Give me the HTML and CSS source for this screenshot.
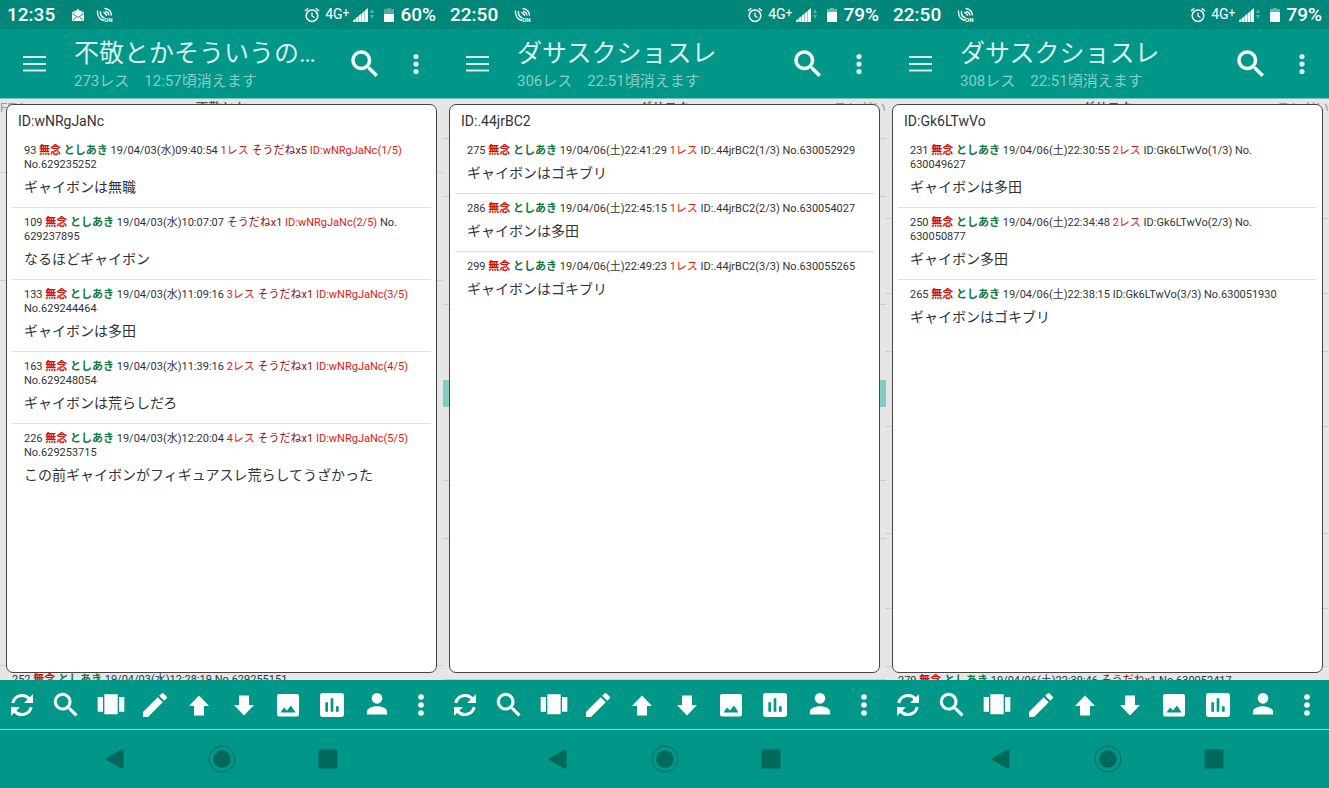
FILE: index.html
```html
<!DOCTYPE html>
<html lang="ja">
<head>
<meta charset="utf-8">
<meta name="viewport" content="width=device-width, initial-scale=1">
<title>スレッド ID抽出</title>
<link rel="stylesheet" href="styles.css">
</head>
<body>
<svg class="sprite" aria-hidden="true">
  <symbol id="mail" viewBox="0 0 14 14"><path d="M1 3.500 4 5 2.500 2.500 5 3 7 .8 9 3l2.500-.5L10 5l3-1.500V13H1z" fill="#fff"/><path d="M1.500 5.500 7 9.500l5.500-4M2 12.500l3.500-3.800M12 12.500 8.500 8.700" stroke="#00877a" fill="none" stroke-width=".9"/></symbol>
  <symbol id="sat" viewBox="0 0 17 16"><g fill="none" stroke="#fff" stroke-width="1.400"><path d="M1.500 3.500c-.5 5 2 9 6.500 10M4.500 4c-.5 3.500 1 6 4 7M7.500 5 11 8.500M8.500 1.500c4 .3 6.700 3 7 7M9 4.500c2.300.2 3.700 1.700 4 4"/></g></symbol>
  <symbol id="alarm" viewBox="0 0 16 16"><g fill="none" stroke="#fff"><circle cx="8" cy="8.700" r="5.800" stroke-width="1.500"/><path d="M8 5.500V9l2.500 1.500" stroke-width="1.200"/><path d="M1 4 4.200 1.200M15 4l-3.200-2.800" stroke-width="1.500"/></g></symbol>
  <symbol id="signal" viewBox="0 0 22 16"><path d="M0 15v-1.500l2.600-2V15zM3 15v-4l2.600-2v6zM6 15V8.500l2.600-2V15zM9 15V6l2.600-2v11zM12 15V3.500L15 1v14z" fill="#fff"/><path d="m17 6 2-4 2 4zM17 8h4l-2 4z" fill="#fff" opacity=".35"/></symbol>
  <symbol id="bat60" viewBox="0 0 10 16"><path d="M3 1h4v1h3v5H0V2h3z" fill="#fff" opacity=".3"/><path d="M0 7h10v8H0z" fill="#fff"/></symbol>
  <symbol id="bat79" viewBox="0 0 10 16"><path d="M3 1h4v1h3v3H0V2h3z" fill="#fff" opacity=".4"/><path d="M0 5h10v10H0z" fill="#fff"/></symbol>
  <symbol id="menu" viewBox="0 0 24 24"><path d="M0 4h23v2H0zM0 11h23v2H0zM0 17.500h23v2H0z" fill="currentColor"/></symbol>
  <symbol id="search" viewBox="0 0 24 24"><path d="M15.500 14h-.79l-.28-.27A6.471 6.471 0 0 0 16 9.500 6.500 6.500 0 1 0 9.500 16c1.610 0 3.090-.59 4.230-1.570l.27.28v.79l5 4.990L20.490 19l-4.990-5zm-6 0C7.010 14 5 11.990 5 9.500S7.010 5 9.500 5 14 7.010 14 9.500 11.990 14 9.500 14z" fill="currentColor" stroke="currentColor" stroke-width=".35"/></symbol>
  <symbol id="more" viewBox="0 0 24 24"><g fill="currentColor"><circle cx="12" cy="6" r="2.100"/><circle cx="12" cy="12" r="2.100"/><circle cx="12" cy="18" r="2.100"/></g></symbol>
  <symbol id="refresh" viewBox="0 0 32 32"><g fill="none" stroke="currentColor" stroke-width="3"><path d="M6.800 14A9.500 9.500 0 0 1 23.500 10"/><path d="M25.200 18A9.500 9.500 0 0 1 8.500 22"/></g><path d="M27 5v9h-9zM5 27v-9h9z" fill="currentColor"/></symbol>
  <symbol id="carousel" viewBox="0 0 24 24"><path d="M7 19h10V4H7zM2 17h4V6H2zM18 6v11h4V6z" fill="currentColor"/></symbol>
  <symbol id="edit" viewBox="0 0 24 24"><path d="M3 17.250V21h3.750L17.810 9.940l-3.750-3.750L3 17.250zM20.710 7.040a1 1 0 0 0 0-1.410l-2.340-2.340a1 1 0 0 0-1.410 0l-1.830 1.830 3.750 3.750 1.830-1.830z" fill="currentColor"/></symbol>
  <symbol id="up" viewBox="0 0 32 32"><path d="m16 6.500 10 10.500h-5v9.500H11V17H6z" fill="currentColor"/></symbol>
  <symbol id="down" viewBox="0 0 32 32"><path d="M16 26.500 6 16h5V6.500h10V16h5z" fill="currentColor"/></symbol>
  <symbol id="image" viewBox="0 0 32 32"><path fill-rule="evenodd" d="M7 5h18a2 2 0 0 1 2 2v18.500a2 2 0 0 1-2 2H7a2 2 0 0 1-2-2V7a2 2 0 0 1 2-2zm1.500 18.500h15l-4.500-7-4 5-3-3z" fill="currentColor"/></symbol>
  <symbol id="chart" viewBox="0 0 24 24"><path d="M19 3H5a2 2 0 0 0-2 2v14a2 2 0 0 0 2 2h14a2 2 0 0 0 2-2V5a2 2 0 0 0-2-2zM9 17H7v-7h2zm4 0h-2V7h2zm4 0h-2v-4h2z" fill="currentColor"/></symbol>
  <symbol id="person" viewBox="0 0 24 24"><path d="M12 11a4 4 0 1 0 0-8 4 4 0 0 0 0 8zm0 2c-2.670 0-7.600 1.340-7.600 4v2.200h15.200V17c0-2.660-4.930-4-7.600-4z" fill="currentColor"/></symbol>
  <symbol id="back" viewBox="0 0 28 28"><path d="M5.500 13 20.500 4.500q2-.8 2 1v17q0 1.800-2 1L5.500 15q-1.500-1 0-2z" fill="currentColor"/></symbol>
  <symbol id="home" viewBox="0 0 28 28"><circle cx="14" cy="14" r="13" fill="none" stroke="currentColor"/><circle cx="14" cy="14" r="8.700" fill="currentColor"/></symbol>
  <symbol id="recent" viewBox="0 0 28 28"><rect x="4.500" y="4.500" width="19" height="19" rx="1.500" fill="currentColor"/></symbol>
</svg>

<main class="phones">
  <section class="phone">
    <div class="status">
      <span class="clock">12:35</span>
      <svg class="ico-mail"><use href="#mail"/></svg>
      <svg class="ico-sat" viewBox="0 0 17 16"><use href="#sat"/><text x="8" y="15" class="on-mark">ON</text></svg>
      <span class="spacer"></span>
      <svg class="ico-alarm"><use href="#alarm"/></svg>
      <span class="net">4G<span class="plus">+</span></span>
      <svg class="ico-signal"><use href="#signal"/></svg>
      <svg class="ico-bat"><use href="#bat60"/></svg>
      <span class="level">60%</span>
    </div>
    <header class="appbar">
      <button class="icon-btn menu-btn" aria-label="メニュー"><svg><use href="#menu"/></svg></button>
      <div class="titles"><h1 class="title">不敬とかそういうの…</h1><p class="subtitle">273レス　12:57頃消えます</p></div>
      <button class="icon-btn search-btn" aria-label="検索"><svg><use href="#search"/></svg></button>
      <button class="icon-btn more-btn" aria-label="その他"><svg><use href="#more"/></svg></button>
    </header>
    <div class="stage">
      <div class="feed feed-a" aria-hidden="true">
        <div class="feed-row tabs"><span>FEVユ</span><span class="tab-now">不敬とか</span><span></span></div>
        <div class="feed-row"></div>
        <div class="feed-row"></div>
        <div class="feed-row post-peek"><p class="meta">252 <b class="subj">無念</b> <b class="name">としあき</b> 19/04/03(水)12:28:19 No.629255151</p></div>
      </div>
      <article class="dialog">
        <h2 class="dialog-title">ID:wNRgJaNc</h2>
        <ul class="posts">
          <li class="post"><p class="meta">93 <b class="subj">無念</b> <b class="name">としあき</b> 19/04/03(水)09:40:54 <span class="red">1レス</span> <span class="soudane">そうだねx5</span> <span class="red">ID:wNRgJaNc(1/5)</span> No.629235252</p><p class="body">ギャイボンは無職</p></li>
          <li class="post"><p class="meta">109 <b class="subj">無念</b> <b class="name">としあき</b> 19/04/03(水)10:07:07 <span class="soudane">そうだねx1</span> <span class="red">ID:wNRgJaNc(2/5)</span> No.<wbr>629237895</p><p class="body">なるほどギャイボン</p></li>
          <li class="post"><p class="meta">133 <b class="subj">無念</b> <b class="name">としあき</b> 19/04/03(水)11:09:16 <span class="red">3レス</span> <span class="soudane">そうだねx1</span> <span class="red">ID:wNRgJaNc(3/5)</span> No.629244464</p><p class="body">ギャイボンは多田</p></li>
          <li class="post"><p class="meta">163 <b class="subj">無念</b> <b class="name">としあき</b> 19/04/03(水)11:39:16 <span class="red">2レス</span> <span class="soudane">そうだねx1</span> <span class="red">ID:wNRgJaNc(4/5)</span> No.629248054</p><p class="body">ギャイボンは荒らしだろ</p></li>
          <li class="post"><p class="meta">226 <b class="subj">無念</b> <b class="name">としあき</b> 19/04/03(水)12:20:04 <span class="red">4レス</span> <span class="soudane">そうだねx1</span> <span class="red">ID:wNRgJaNc(5/5)</span> No.629253715</p><p class="body">この前ギャイボンがフィギュアスレ荒らしてうざかった</p></li>
        </ul>
      </article>
    </div>
    <div class="toolbar">
      <button class="tool" aria-label="更新"><svg><use href="#refresh"/></svg></button>
      <button class="tool" aria-label="検索"><svg><use href="#search"/></svg></button>
      <button class="tool" aria-label="一覧"><svg><use href="#carousel"/></svg></button>
      <button class="tool" aria-label="書き込み"><svg><use href="#edit"/></svg></button>
      <button class="tool" aria-label="上へ"><svg><use href="#up"/></svg></button>
      <button class="tool" aria-label="下へ"><svg><use href="#down"/></svg></button>
      <button class="tool" aria-label="画像"><svg><use href="#image"/></svg></button>
      <button class="tool" aria-label="集計"><svg><use href="#chart"/></svg></button>
      <button class="tool" aria-label="ID"><svg><use href="#person"/></svg></button>
      <button class="tool" aria-label="その他"><svg><use href="#more"/></svg></button>
    </div>
    <nav class="sysnav">
      <button class="sys" aria-label="戻る"><svg><use href="#back"/></svg></button>
      <button class="sys" aria-label="ホーム"><svg><use href="#home"/></svg></button>
      <button class="sys" aria-label="履歴"><svg><use href="#recent"/></svg></button>
    </nav>
  </section>

  <section class="phone">
    <div class="status">
      <span class="clock">22:50</span>
      <svg class="ico-sat" viewBox="0 0 17 16"><use href="#sat"/><text x="8" y="15" class="on-mark">ON</text></svg>
      <span class="spacer"></span>
      <svg class="ico-alarm"><use href="#alarm"/></svg>
      <span class="net">4G<span class="plus">+</span></span>
      <svg class="ico-signal"><use href="#signal"/></svg>
      <svg class="ico-bat"><use href="#bat79"/></svg>
      <span class="level">79%</span>
    </div>
    <header class="appbar">
      <button class="icon-btn menu-btn" aria-label="メニュー"><svg><use href="#menu"/></svg></button>
      <div class="titles"><h1 class="title">ダサスクショスレ</h1><p class="subtitle">306レス　22:51頃消えます</p></div>
      <button class="icon-btn search-btn" aria-label="検索"><svg><use href="#search"/></svg></button>
      <button class="icon-btn more-btn" aria-label="その他"><svg><use href="#more"/></svg></button>
    </header>
    <div class="stage">
      <div class="feed feed-b" aria-hidden="true">
        <div class="feed-row tabs"><span></span><span class="tab-now">ダサスク</span><span class="tab-next">スレだい</span></div>
        <div class="feed-row"></div>
        <div class="feed-row"></div>
        <div class="feed-row no-line"></div>
        <div class="feed-row highlight no-line"></div>
        <div class="feed-row"></div>
        <div class="feed-row"></div>
        <div class="feed-row"></div>
      </div>
      <article class="dialog">
        <h2 class="dialog-title">ID:.44jrBC2</h2>
        <ul class="posts">
          <li class="post"><p class="meta">275 <b class="subj">無念</b> <b class="name">としあき</b> 19/04/06(土)22:41:29 <span class="red">1レス</span> ID:.44jrBC2(1/3) No.630052929</p><p class="body">ギャイボンはゴキブリ</p></li>
          <li class="post"><p class="meta">286 <b class="subj">無念</b> <b class="name">としあき</b> 19/04/06(土)22:45:15 <span class="red">1レス</span> ID:.44jrBC2(2/3) No.630054027</p><p class="body">ギャイボンは多田</p></li>
          <li class="post"><p class="meta">299 <b class="subj">無念</b> <b class="name">としあき</b> 19/04/06(土)22:49:23 <span class="red">1レス</span> ID:.44jrBC2(3/3) No.630055265</p><p class="body">ギャイボンはゴキブリ</p></li>
        </ul>
      </article>
    </div>
    <div class="toolbar">
      <button class="tool" aria-label="更新"><svg><use href="#refresh"/></svg></button>
      <button class="tool" aria-label="検索"><svg><use href="#search"/></svg></button>
      <button class="tool" aria-label="一覧"><svg><use href="#carousel"/></svg></button>
      <button class="tool" aria-label="書き込み"><svg><use href="#edit"/></svg></button>
      <button class="tool" aria-label="上へ"><svg><use href="#up"/></svg></button>
      <button class="tool" aria-label="下へ"><svg><use href="#down"/></svg></button>
      <button class="tool" aria-label="画像"><svg><use href="#image"/></svg></button>
      <button class="tool" aria-label="集計"><svg><use href="#chart"/></svg></button>
      <button class="tool" aria-label="ID"><svg><use href="#person"/></svg></button>
      <button class="tool" aria-label="その他"><svg><use href="#more"/></svg></button>
    </div>
    <nav class="sysnav">
      <button class="sys" aria-label="戻る"><svg><use href="#back"/></svg></button>
      <button class="sys" aria-label="ホーム"><svg><use href="#home"/></svg></button>
      <button class="sys" aria-label="履歴"><svg><use href="#recent"/></svg></button>
    </nav>
  </section>

  <section class="phone">
    <div class="status">
      <span class="clock">22:50</span>
      <svg class="ico-sat" viewBox="0 0 17 16"><use href="#sat"/><text x="8" y="15" class="on-mark">ON</text></svg>
      <span class="spacer"></span>
      <svg class="ico-alarm"><use href="#alarm"/></svg>
      <span class="net">4G<span class="plus">+</span></span>
      <svg class="ico-signal"><use href="#signal"/></svg>
      <svg class="ico-bat"><use href="#bat79"/></svg>
      <span class="level">79%</span>
    </div>
    <header class="appbar">
      <button class="icon-btn menu-btn" aria-label="メニュー"><svg><use href="#menu"/></svg></button>
      <div class="titles"><h1 class="title">ダサスクショスレ</h1><p class="subtitle">308レス　22:51頃消えます</p></div>
      <button class="icon-btn search-btn" aria-label="検索"><svg><use href="#search"/></svg></button>
      <button class="icon-btn more-btn" aria-label="その他"><svg><use href="#more"/></svg></button>
    </header>
    <div class="stage">
      <div class="feed feed-c" aria-hidden="true">
        <div class="feed-row tabs"><span></span><span class="tab-now">ダサスク</span><span class="tab-next">スレだい</span></div>
        <div class="feed-row"></div>
        <div class="feed-row"></div>
        <div class="feed-row"></div>
        <div class="feed-row"></div>
        <div class="feed-row"></div>
        <div class="feed-row"></div>
        <div class="feed-row post-peek"><p class="meta">279 <b class="subj">無念</b> <b class="name">としあき</b> 19/04/06(土)22:39:46 <span class="soudane">そうだねx1</span> No.630052417</p></div>
      </div>
      <article class="dialog">
        <h2 class="dialog-title">ID:Gk6LTwVo</h2>
        <ul class="posts">
          <li class="post"><p class="meta">231 <b class="subj">無念</b> <b class="name">としあき</b> 19/04/06(土)22:30:55 <span class="red">2レス</span> ID:Gk6LTwVo(1/3) No.<wbr>630049627</p><p class="body">ギャイボンは多田</p></li>
          <li class="post"><p class="meta">250 <b class="subj">無念</b> <b class="name">としあき</b> 19/04/06(土)22:34:48 <span class="red">2レス</span> ID:Gk6LTwVo(2/3) No.<wbr>630050877</p><p class="body">ギャイボン多田</p></li>
          <li class="post"><p class="meta">265 <b class="subj">無念</b> <b class="name">としあき</b> 19/04/06(土)22:38:15 ID:Gk6LTwVo(3/3) No.630051930</p><p class="body">ギャイボンはゴキブリ</p></li>
        </ul>
      </article>
    </div>
    <div class="toolbar">
      <button class="tool" aria-label="更新"><svg><use href="#refresh"/></svg></button>
      <button class="tool" aria-label="検索"><svg><use href="#search"/></svg></button>
      <button class="tool" aria-label="一覧"><svg><use href="#carousel"/></svg></button>
      <button class="tool" aria-label="書き込み"><svg><use href="#edit"/></svg></button>
      <button class="tool" aria-label="上へ"><svg><use href="#up"/></svg></button>
      <button class="tool" aria-label="下へ"><svg><use href="#down"/></svg></button>
      <button class="tool" aria-label="画像"><svg><use href="#image"/></svg></button>
      <button class="tool" aria-label="集計"><svg><use href="#chart"/></svg></button>
      <button class="tool" aria-label="ID"><svg><use href="#person"/></svg></button>
      <button class="tool" aria-label="その他"><svg><use href="#more"/></svg></button>
    </div>
    <nav class="sysnav">
      <button class="sys" aria-label="戻る"><svg><use href="#back"/></svg></button>
      <button class="sys" aria-label="ホーム"><svg><use href="#home"/></svg></button>
      <button class="sys" aria-label="履歴"><svg><use href="#recent"/></svg></button>
    </nav>
  </section>
</main>
</body>
</html>
```
FILE: styles.css
```css
* { box-sizing: border-box; }
body, h1, h2, p, ul { margin: 0; padding: 0; }
body {
  font-family: Roboto, "Noto Sans CJK JP", sans-serif;
  font-size: 14px;
  color: #333;
  background: #009688;
}
button { border: 0; padding: 0; background: none; color: inherit; cursor: pointer; }
svg { display: block; flex: none; }
.sprite { position: absolute; width: 0; height: 0; }

.phones { display: grid; grid-template-columns: repeat(3, minmax(0, 1fr)); min-height: 100vh; }
.phone { display: flex; flex-direction: column; background: #009688; color: #fff; }

/* Android status bar */
.status {
  display: flex;
  align-items: center;
  height: 29px;
  padding: 0 7px;
  background: #00877a;
  font-size: 19px;
  font-weight: 500;
  line-height: 29px;
}
.clock { margin-right: 16px; }
.spacer { flex: 1; }
.ico-mail { width: 14px; height: 14px; margin-right: 11px; }
.ico-sat { width: 17px; height: 16px; }
.ico-alarm { width: 16px; height: 16px; margin-right: 5px; }
.net { display: flex; font-size: 14px; font-weight: 400; margin-right: 4px; }
.plus { line-height: 26px; font-size: 12px; }
.ico-signal { width: 22px; height: 16px; margin-right: 9px; }
.ico-bat { width: 10px; height: 16px; margin-right: 6px; }
.on-mark { font: 700 6px Roboto, sans-serif; fill: #fff; }

/* App bar */
.appbar {
  display: flex;
  align-items: center;
  height: 70px;
  padding: 0 12px 0 23px;
  border-bottom: 1px solid #73c3bc;
}
.icon-btn { flex: none; }
.menu-btn { margin-right: 27px; color: #d9efed; }
.menu-btn svg { width: 24px; height: 24px; }
.search-btn { margin-right: 18px; }
.search-btn svg { width: 36px; height: 36px; }
.more-btn { color: #d9efed; }
.more-btn svg { width: 30px; height: 30px; }
.titles { flex: 1; min-width: 0; padding-top: 4px; }
.title {
  font-size: 25px;
  font-weight: 400;
  line-height: 30px;
  color: #d9efed;
  white-space: nowrap;
  overflow: hidden;
  text-overflow: ellipsis;
}
.subtitle { font-size: 15px; line-height: 24px; color: #8cccc6; white-space: nowrap; }

/* Thread with the extracted posts laid over it */
.stage { flex: 1; display: grid; background: #e6e6e6; color: #333; }
.feed { grid-area: 1 / 1; display: grid; contain: size; overflow: hidden; }
.feed-a { grid-template-rows: 74fr 108fr 385fr 14fr; }
.feed-b { grid-template-rows: 40fr 58fr 108fr 75fr 27fr 74fr 58fr 141fr; }
.feed-c { grid-template-rows: 120fr 75fr 58fr 75fr 107fr 75fr 58fr 13fr; }
.feed-row { min-height: 0; border-bottom: 1px solid #ccc; overflow: hidden; }
.no-line { border-bottom-color: transparent; }
.highlight { background: #84cbc4; }
.tabs { display: grid; grid-template-columns: 1fr auto 1fr; font-size: 13px; line-height: 18px; color: #999; }
.tab-now { color: #555; font-weight: 500; }
.tab-next { text-align: right; }
.post-peek { padding: 7px 12px 0; border: 0; }
.dialog {
  grid-area: 1 / 1;
  margin: 5px 6px 7px;
  padding: 0 5px;
  background: #fff;
  border: 1px solid #444;
  border-radius: 7px;
  z-index: 1;
}
.dialog-title { padding: 8px 6px 6px; font-size: 14px; font-weight: 400; line-height: 16px; }
.posts { list-style: none; }
.post { padding: 8px 12px 10px; border-top: 1px solid #e2e0e3; }
.post:first-child { border-top-color: transparent; }
.meta { font-size: 11px; line-height: 14px; }
.body { margin-top: 5px; font-size: 14px; line-height: 20px; }
.subj { color: #cc1105; }
.name { color: #117743; }
.red { color: #dd1a10; }
.soudane { color: #8c0c0c; }

/* Bottom tools and system navigation */
.toolbar { display: flex; align-items: center; height: 50px; border-bottom: 1px solid #a5d3cf; }
.tool { flex: 1; display: flex; justify-content: center; }
.tool svg { width: 32px; height: 32px; }
.sysnav { display: flex; justify-content: center; align-items: center; height: 58px; color: #00695c; }
.sys { width: 24%; display: flex; justify-content: center; }
.sys svg { width: 28px; height: 28px; }
```
